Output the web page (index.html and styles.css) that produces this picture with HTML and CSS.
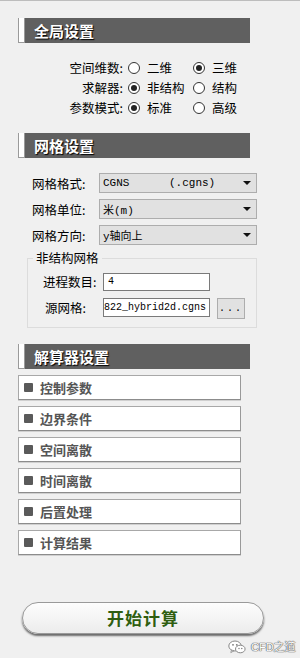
FILE: index.html
```html
<!DOCTYPE html>
<html>
<head>
	<meta charset="UTF-8">
	<meta name="viewport" content="width=device-width,initial-scale=1,maximum-scale=1">
	<title>求解设置</title>
	<link rel="stylesheet" href="styles.css">
</head>
<body>
	<div class="panel">
		<div class="head">全局设置</div>
		<div class="radios">
			<div class="rrow">
				<span class="rlabel">空间维数:</span>
				<span class="opt"><span class="radio"></span>二维</span>
				<span class="opt"><span class="radio on"></span>三维</span>
			</div>
			<div class="rrow">
				<span class="rlabel">求解器:</span>
				<span class="opt"><span class="radio on"></span>非结构</span>
				<span class="opt"><span class="radio"></span>结构</span>
			</div>
			<div class="rrow">
				<span class="rlabel">参数模式:</span>
				<span class="opt"><span class="radio on"></span>标准</span>
				<span class="opt"><span class="radio"></span>高级</span>
			</div>
		</div>

		<div class="head second">网格设置</div>
		<div class="selects">
			<div class="srow">
				<span class="slabel">网格格式:</span>
				<div class="select"><span class="val">CGNS      (.cgns)</span><span class="arrow"></span></div>
			</div>
			<div class="srow">
				<span class="slabel">网格单位:</span>
				<div class="select"><span class="val">米(m)</span><span class="arrow"></span></div>
			</div>
			<div class="srow">
				<span class="slabel">网格方向:</span>
				<div class="select"><span class="val">y轴向上</span><span class="arrow"></span></div>
			</div>
		</div>
		<fieldset class="group">
			<legend>非结构网格</legend>
			<div class="frow">
				<span class="flabel">进程数目:</span>
				<div class="field">4</div>
			</div>
			<div class="frow">
				<span class="flabel src">源网格:</span>
				<div class="field tall">822_hybrid2d.cgns</div>
				<div class="browse">...</div>
			</div>
		</fieldset>

		<div class="head third">解算器设置</div>
		<div class="items">
			<div class="item"><span class="sq"></span>控制参数</div>
			<div class="item"><span class="sq"></span>边界条件</div>
			<div class="item"><span class="sq"></span>空间离散</div>
			<div class="item"><span class="sq"></span>时间离散</div>
			<div class="item"><span class="sq"></span>后置处理</div>
			<div class="item"><span class="sq"></span>计算结果</div>
		</div>

		<div class="start">开始计算</div>
	</div>

	<div class="mark">
		<svg width="18" height="14" viewBox="0 0 18 14">
			<ellipse cx="7" cy="6" rx="6.2" ry="5" fill="#fff" stroke="#888" stroke-width="1"/>
			<path d="M3.5 10 L2.8 12.6 L6 10.8 Z" fill="#fff" stroke="#888" stroke-width="0.8"/>
			<ellipse cx="12.3" cy="9" rx="4.8" ry="3.8" fill="#fff" stroke="#888" stroke-width="1"/>
			<circle cx="5" cy="4.8" r="0.9" fill="#777"/>
			<circle cx="8.8" cy="4.8" r="0.9" fill="#777"/>
			<circle cx="11" cy="8.5" r="0.7" fill="#777"/>
			<circle cx="13.8" cy="8.5" r="0.7" fill="#777"/>
		</svg>
		<span class="mtext">CFD之道</span>
	</div>
</body>
</html>
```

FILE: styles.css
```css
body{
	margin: 0;
	background: #f0f0f0;
	border-top: 1px solid #bdbdbd;
	font-family: "Noto Sans CJK SC", "Liberation Sans", sans-serif;
	font-size: 12px;
	color: #000;
	height: 657px;
	position: relative;
	overflow: hidden;
}
.panel{
	padding-left: 18px;
}
.head{
	box-sizing: border-box;
	width: 232px;
	height: 25px;
	margin-top: 17px;
	background: #606060;
	color: #fff;
	font-size: 15px;
	font-weight: bold;
	line-height: 25px;
	padding-left: 16px;
	text-shadow: 1px 1px 1px #000;
	position: relative;
}
.head::before{
	content: "";
	position: absolute;
	left: 0;
	top: 0;
	width: 5px;
	height: 24px;
	background: #fff;
	border: 1px solid #9a9a9a;
	border-top: 0;
}
.second{
	margin-top: 15px;
}
.third{
	margin-top: 16px;
}

.radios{
	margin-top: 15px;
}
.rrow{
	display: flex;
	align-items: center;
	height: 20px;
	line-height: 20px;
	font-size: 12.5px;
}
.rlabel{
	width: 110px;
	text-align: right;
	padding-right: 5px;
	box-sizing: border-box;
}
.opt{
	display: flex;
	align-items: center;
	width: 65px;
}
.radio{
	box-sizing: border-box;
	width: 12px;
	height: 12px;
	border: 1px solid #333;
	border-radius: 50%;
	background: #fff;
	margin-right: 7px;
	display: flex;
	align-items: center;
	justify-content: center;
}
.radio.on::after{
	content: "";
	width: 6px;
	height: 6px;
	border-radius: 50%;
	background: #222;
}

.selects{
	margin-top: 15px;
	margin-left: 14px;
	display: flex;
	flex-direction: column;
	gap: 6px;
}
.srow{
	display: flex;
	align-items: center;
	height: 20px;
}
.slabel{
	width: 67px;
	font-size: 12.5px;
}
.select{
	box-sizing: border-box;
	width: 158px;
	height: 20px;
	background: #e1e1e1;
	border: 1px solid #adadad;
	display: flex;
	align-items: center;
	justify-content: space-between;
	padding: 0 5px 0 3px;
}
.val{
	font-family: "Liberation Mono", "Noto Sans CJK SC", monospace;
	font-size: 11px;
	white-space: pre;
}
.arrow{
	width: 0;
	height: 0;
	border-left: 4px solid transparent;
	border-right: 4px solid transparent;
	border-top: 4px solid #111;
}

.group{
	box-sizing: border-box;
	margin: 5px 0 0 9px;
	width: 230px;
	border: 1px solid #dcdcdc;
	padding: 7px 0 8px 15px;
}
.group legend{
	margin-left: -10px;
	padding: 0 3px;
	line-height: 16px;
	font-size: 12.5px;
}
.frow{
	display: flex;
	align-items: flex-start;
	margin-bottom: 7px;
}
.frow:last-child{
	margin-bottom: 0;
}
.flabel{
	width: 60px;
	line-height: 18px;
	font-size: 12.5px;
}
.flabel.src{
	padding-left: 2px;
	width: 58px;
	line-height: 19px;
}
.field{
	box-sizing: border-box;
	width: 107px;
	height: 18px;
	border: 1px solid #7a7a7a;
	background: #fff;
	font-family: "Liberation Mono", "Noto Sans CJK SC", monospace;
	font-size: 10px;
	line-height: 16px;
	padding-left: 4px;
	white-space: nowrap;
	overflow: hidden;
}
.field.tall{
	height: 19px;
	line-height: 17px;
	padding-left: 0;
}
.browse{
	box-sizing: border-box;
	width: 28px;
	height: 21px;
	margin-left: 7px;
	background: #e1e1e1;
	border: 1px solid #adadad;
	text-align: center;
	font-family: "Liberation Mono", monospace;
	font-size: 10px;
	line-height: 20px;
	letter-spacing: 2px;
}

.items{
	margin-top: 6px;
	display: flex;
	flex-direction: column;
	gap: 6px;
}
.item{
	box-sizing: border-box;
	width: 223px;
	height: 25px;
	background: #fff;
	border: 1px solid #a8a8a8;
	border-bottom-color: #8c8c8c;
	border-right-color: #999;
	box-shadow: 0 1px 0 #d0d0d0;
	display: flex;
	align-items: center;
	padding-left: 5px;
	color: #555;
	font-weight: bold;
	font-size: 13px;
}
.sq{
	width: 9px;
	height: 9px;
	background: #5a5a5a;
	border-radius: 1px;
	margin-right: 7px;
}

.start{
	box-sizing: border-box;
	margin: 47px 0 0 4px;
	width: 242px;
	height: 32px;
	border: 1px solid #9a9a9a;
	border-radius: 16px;
	background: linear-gradient(#fdfdfd, #ececec);
	box-shadow: 0 2px 2px #6a6a6a;
	text-align: center;
	line-height: 30px;
	color: #2f5e10;
	font-size: 17px;
	font-weight: bold;
	letter-spacing: 1px;
}

.mark{
	position: absolute;
	left: 228px;
	top: 638px;
	height: 16px;
	display: flex;
	align-items: center;
	gap: 5px;
}
.mtext{
	font-family: "Liberation Sans", "Noto Sans CJK SC", sans-serif;
	font-size: 11px;
	line-height: 14px;
	color: #fff;
	text-shadow: 0 0 1px #555, 0 0 1px #555, 0 0 1px #555;
	white-space: nowrap;
}
```
